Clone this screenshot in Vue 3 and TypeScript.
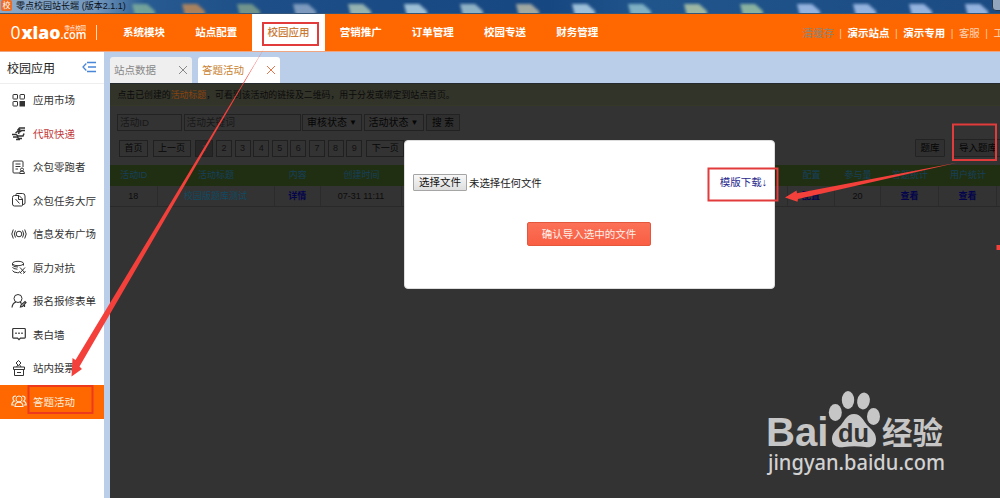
<script setup lang="ts">
interface MenuItem { label: string; icon: string; tone?: string }
interface Column { title: string; width: number; value: string; kind?: string }

const nav: string[] = ['系统模块', '站点配置', '校园应用', '营销推广', '订单管理', '校园专送', '财务管理']

const menu: MenuItem[] = [
  { label: '应用市场', icon: 'grid' },
  { label: '代取快递', icon: 'express', tone: 'red' },
  { label: '众包零跑者', icon: 'runner' },
  { label: '众包任务大厅', icon: 'tasks' },
  { label: '信息发布广场', icon: 'radio' },
  { label: '原力对抗', icon: 'force' },
  { label: '报名报修表单', icon: 'person' },
  { label: '表白墙', icon: 'chat' },
  { label: '站内投票', icon: 'vote' },
  { label: '答题活动', icon: 'group', tone: 'active' },
]

const pages: number[] = [2, 3, 4, 5, 6, 7, 8, 9]

const columns: Column[] = [
  { title: '活动ID', width: 47.5, value: '18' },
  { title: '活动标题', width: 117, value: '校园版题库测试', kind: 'title' },
  { title: '内容', width: 46.5, value: '详情', kind: 'link' },
  { title: '创建时间', width: 81, value: '07-31 11:11' },
  { title: '', width: 386, value: '' },
  { title: '配置', width: 47, value: '配置', kind: 'link' },
  { title: '参与量', width: 46, value: '20' },
  { title: '答题统计', width: 58, value: '查看', kind: 'link' },
  { title: '用户统计', width: 58, value: '查看', kind: 'link' },
  { title: '', width: 4, value: '' },
]
const gridColumns = columns.map((c) => c.width + 'px').join(' ')

const glints = [
  { x: 132, c: '#7fae9c' }, { x: 182, c: '#c08a58' }, { x: 237, c: '#7fa08c' }, { x: 293, c: '#8fa8c8' },
  { x: 348, c: '#a9c4b8' }, { x: 404, c: '#b4d4e4' }, { x: 460, c: '#a4c4d0' }, { x: 516, c: '#b9b9a8' },
  { x: 572, c: '#b4d4e8' }, { x: 628, c: '#8fc0cc' }, { x: 684, c: '#b3c9a8' }, { x: 740, c: '#9cc2a4' },
  { x: 797, c: '#a9c4ee' }, { x: 853, c: '#a9c4ee' }, { x: 909, c: '#a9c4ee' }, { x: 965, c: '#a9c4ee' },
]
</script>

<template>
  <div class="window">
    <div class="titlebar">
      <svg class="glints" width="1000" height="14">
        <defs><filter id="soft"><feGaussianBlur stdDeviation="1.5" /></filter></defs>
        <g filter="url(#soft)">
          <path v-for="g in glints" :key="g.x" :fill="g.c" :d="`M${g.x} 4h15l8 7v5h-20z`" />
        </g>
      </svg>
      <span class="app-icon">校</span>
      <span class="app-title">零点校园站长端 (版本2.1.1)</span>
      <span class="win-btn"></span>
    </div>

    <header class="header">
      <svg class="logo" width="108" height="37" viewBox="0 0 108 37">
        <g fill="#fff">
          <text x="10.5" y="24.5" font-family="Open Sans, sans-serif" font-size="18.5" textLength="10" lengthAdjust="spacingAndGlyphs">0</text>
          <text x="21.5" y="24.5" font-family="Open Sans, sans-serif" font-size="18" font-weight="800" textLength="39" lengthAdjust="spacingAndGlyphs">xiao</text>
          <text x="60.5" y="24.5" font-family="Open Sans, sans-serif" font-size="12" font-weight="600" textLength="26" lengthAdjust="spacingAndGlyphs">.com</text>
          <text x="64.5" y="15.500" font-family="Noto Sans CJK SC, sans-serif" font-size="5.4" textLength="21.5">零点校园</text>
          <rect x="96" y="11" width="1" height="15" opacity=".75" />
        </g>
      </svg>
      <nav class="nav">
        <a v-for="(n, i) in nav" :key="n" :class="{ active: i === 2 }">{{ n }}</a>
      </nav>
      <div class="tools">
        <span class="cache">清缓存</span><i>|</i><b>演示站点</b><i>|</i><b>演示专用</b><i>|</i><span>客服</span><i>|</i><span>工具</span>
      </div>
    </header>

    <div class="body">
      <aside class="sidebar">
        <div class="side-head">
          <span>校园应用</span>
          <svg width="15" height="12" viewBox="0 0 15 12" fill="none" stroke="#4a86d8" stroke-width="1.3">
            <path d="M5 1.5h9M6 6h8M5 10.5h9M4.3 2.5L1 6l3.300 3.500" />
          </svg>
        </div>
        <div v-for="m in menu" :key="m.label" class="side-item" :class="m.tone">
          <svg width="16" height="16" viewBox="0 0 16 16" fill="none" stroke="currentColor" stroke-width="1">
            <template v-if="m.icon === 'grid'">
              <rect x="2" y="2.500" width="4.500" height="4.500" rx=".5" /><rect x="9" y="2.500" width="4.500" height="4.500" rx=".5" />
              <rect x="2" y="9.500" width="4.500" height="4.500" rx=".5" /><rect x="9" y="9.500" width="4.500" height="4.500" fill="currentColor" />
            </template>
            <template v-else-if="m.icon === 'express'">
              <path d="M6.500 5.500l2-2.500h5.500M4.500 8l2-1.500h3l1-1h3.500M1 9.500h4l2 1.500h5l1-2.500M2 12h4.500l1 1.500h3.500M5 14.500h4M9 4l-1.500 5" stroke-width="1.500" />
            </template>
            <template v-else-if="m.icon === 'runner'">
              <path d="M8 14H3q-1 0-1-1V3q0-1 1-1h8q1 0 1 1v5M4.500 5h5M4.500 7.500h5M4.500 10H7" />
              <circle cx="11" cy="10.500" r="1.500" /><path d="M8.500 14.500q0-2.500 2.500-2.500t2.500 2.500z" />
            </template>
            <template v-else-if="m.icon === 'tasks'">
              <path d="M5 3V2.500q0-1 1-1h5.500q2.500 0 2.500 2.500v7q0 1.500-2 1.500" />
              <path d="M3.500 3.500h4.500L11.500 7V13q0 1-1 1H3.500q-2 0-2-2V5.500q0-2 2-2zM7.500 3.500v4h4M4.500 7l4 4.500" />
            </template>
            <template v-else-if="m.icon === 'radio'">
              <circle cx="8" cy="8" r="2.800" />
              <path d="M4.500 4.500q-2.500 3.500 0 7M2.300 3.500q-3 4.500 0 9M11.500 4.500q2.500 3.500 0 7M13.700 3.500q3 4.500 0 9" />
            </template>
            <template v-else-if="m.icon === 'force'">
              <ellipse cx="7" cy="4.500" rx="5.500" ry="2.200" />
              <path d="M1.500 4.500v1.500q0 2 5.500 2M1.500 8q0 2 5 2.200M1.500 11.500q.5 2 5 2.200H8M12.500 4.500v2M9 8.500l5 5.500M14 8.500L9 14M8 12.500l2.500 2M12 14.500l2.500-2" />
            </template>
            <template v-else-if="m.icon === 'person'">
              <circle cx="7" cy="5.500" r="4" /><path d="M1 14.500q.5-4.500 4-5.500M9 9l1.500 1.500M9.500 14l.5-2 4-3.500 1 1-3.500 4zM13.500 12v2" stroke-width="1.200" />
            </template>
            <template v-else-if="m.icon === 'chat'">
              <path d="M2.500 2.500h11q.8 0 .8.8v8q0 .8-.8.8H9.500L8 13.700 6.500 12.100h-4q-.8 0-.8-.8v-8q0-.8.800-.8z" stroke-width="1.200" />
              <path d="M4.300 7.300h1.400M7.300 7.300h1.400M10.300 7.300h1.400" stroke-width="1.500" />
            </template>
            <template v-else-if="m.icon === 'vote'">
              <path d="M2.500 7h11v2.500h-11zM3.500 9.500h9V15.500h-9zM6 12.500h4M5.500 7L7 5M5 3l2.500-2.500L10 3 7.500 5.500zM8.500 4.500L10 7" />
            </template>
            <template v-else>
              <circle cx="8" cy="6" r="3" /><path d="M4 13.500q0-4 4-4.500 4 .5 4 4.500zM5 3Q1.500 3 2 6q.3 1.500 1.500 2Q.8 9 .8 12H3M11 3q3.500 0 3 3-.3 1.500-1.500 2 2.700 1 2.700 4H13" stroke-width="1.200" />
            </template>
          </svg>
          <span>{{ m.label }}</span>
        </div>
      </aside>

      <main class="content">
        <div class="tabs">
          <div v-for="(t, i) in ['站点数据', '答题活动']" :key="t" class="tab" :class="{ on: i === 1 }">
            <span>{{ t }}</span>
            <svg width="10" height="10" viewBox="0 0 10 10" fill="none" stroke="currentColor"><path d="M1 1l8 8M9 1l-8 8" /></svg>
          </div>
        </div>

        <section class="panel">
          <p class="notice">点击已创建的<em>活动标题</em>，可看到该活动的链接及二维码，用于分发或绑定到站点首页。</p>
          <div class="filters">
            <span class="field id">活动ID</span>
            <span class="field key">活动关键词</span>
            <span class="field sel">审核状态<u>▼</u></span>
            <span class="field sel two">活动状态<u>▼</u></span>
            <span class="field search">搜 索</span>
          </div>
          <div class="pager">
            <span class="pg first">首页</span>
            <span class="pg prev">上一页</span>
            <span class="pg cur">1</span>
            <span class="nums"><span v-for="p in pages" :key="p" class="pg num">{{ p }}</span></span>
            <span class="pg next">下一页</span>
            <span class="spacer"></span>
            <span class="act bank">题库</span>
            <span class="act import">导入题库</span>
          </div>
          <div class="row head" :style="{ gridTemplateColumns: gridColumns }">
            <span v-for="(c, i) in columns" :key="i">{{ c.title }}</span>
          </div>
          <div class="row data" :style="{ gridTemplateColumns: gridColumns }">
            <span v-for="(c, i) in columns" :key="i" :class="c.kind">{{ c.value }}</span>
          </div>
        </section>
      </main>
    </div>

    <div class="modal">
      <div class="file-row">
        <span class="choose">选择文件</span>
        <span class="none">未选择任何文件</span>
        <a class="tpl">模版下载↓</a>
      </div>
      <span class="confirm">确认导入选中的文件</span>
    </div>

    <svg class="overlay" width="1000" height="498" viewBox="0 0 1000 498">
      <g class="brand" fill="#c6c6c6">
        <text x="766" y="446" font-family="Liberation Sans, Arial, sans-serif" font-weight="700" font-size="40" textLength="62.500" lengthAdjust="spacingAndGlyphs">Bai</text>
        <ellipse cx="835.300" cy="412.500" rx="6.500" ry="8.500" />
        <ellipse cx="848" cy="400" rx="6.200" ry="9" />
        <ellipse cx="863.500" cy="401" rx="6.300" ry="8.500" transform="rotate(10 863.500 401)" />
        <ellipse cx="873.500" cy="416.500" rx="6.500" ry="8.500" />
        <path d="M854 414c7 0 9 6 13 11 5 5 9 8 9 14 0 7-5 9-11 8-7-1-14-1-21 0-6 1-12-1-12-8 0-6 4-9 9-14 4-5 6-11 13-11z" />
        <text x="838" y="442" fill="#333" font-family="Liberation Sans, Arial, sans-serif" font-weight="700" font-size="25" textLength="31" lengthAdjust="spacingAndGlyphs">du</text>
        <text x="882" y="443.500" font-family="Noto Sans CJK SC, sans-serif" font-weight="700" font-size="31" textLength="61" lengthAdjust="spacingAndGlyphs">经验</text>
        <text x="768" y="470" fill="#d2d2d2" font-family="Noto Sans, Open Sans, sans-serif" font-size="21.500" font-weight="500" textLength="177" lengthAdjust="spacingAndGlyphs">jingyan.baidu.com</text>
      </g>
      <g fill="none" stroke="#e23b3b" stroke-width="2">
        <rect x="263" y="23" width="55" height="22" />
        <rect x="28.500" y="386" width="64" height="27" stroke="#ee3a1c" />
        <rect x="708.500" y="168.500" width="69" height="32" />
        <rect x="953" y="124.500" width="43" height="35.500" />
      </g>
      <g fill="#f4403b">
        <path d="M265.500 46L79.500 366.500l2.500 2.500-10.500 7.500 1-18.500 3 2z" />
        <path d="M958 162.500L798 199l-.5 2.800L785 197.500l11.500-7 .5 2.800z" />
        <rect x="996.500" y="245" width="4" height="5" />
      </g>
    </svg>
  </div>
</template>

<style>
html, body { margin: 0; overflow: hidden; }
</style>

<style scoped>
.window { position: relative; width: 1000px; height: 498px; overflow: hidden; display: flex; flex-direction: column; background: #bbcee9; font-family: "Liberation Sans", "Noto Sans CJK SC", sans-serif; font-size: 10.5px; color: #333; }
.window * { box-sizing: border-box; }
.window span, .window a, .window b { white-space: nowrap; }
.titlebar { position: relative; flex: 0 0 14px; display: flex; align-items: center; background: linear-gradient(90deg, #8ca9c7 0, #7398bd 95px, #285b91 145px, #1d4e87 260px, #174780 550px, #20558c 650px, #1b4b82); border-bottom: 1px solid #345779; overflow: hidden; }
.glints { position: absolute; left: 0; top: 0; opacity: .85; }
.app-icon { position: relative; width: 11px; height: 11px; margin: -2px 4px 0 1px; border-radius: 2px; background: #f26a1f; color: #fff; font-size: 8px; line-height: 11px; text-align: center; }
.app-title { position: relative; color: #0b1119; font-size: 9px; line-height: 13px; margin-top: -1px; letter-spacing: .02px; }
.win-btn { position: absolute; right: -14px; top: -4px; width: 22px; height: 15px; border: 1px solid #26384d; border-radius: 4px; background: #91a6bd; }
.header { flex: 0 0 38px; height: 38px; display: flex; background: #ff6700; border-bottom: 1px solid #efa582; }
.logo { flex: none; }
.nav { display: flex; }
.nav a { width: 72.200px; line-height: 37.500px; text-align: center; color: #fff; font-weight: 700; }
.nav a.active { background: #fff; color: #c97a35; font-weight: 500; }
.tools { margin-left: 189px; flex: none; display: flex; line-height: 38px; color: #ffd5b8; white-space: nowrap; }
.tools i { width: 13.700px; text-align: center; font-style: normal; color: #ffc59e; }
.tools b { color: #fff; }
.tools .cache { color: #98826c; font-weight: 500; }
.body { flex: 1; display: flex; min-height: 0; }
.sidebar { flex: 0 0 104px; background: #fff; }
.side-head { height: 31.500px; display: flex; align-items: center; justify-content: space-between; padding: 0 7px 0; border-bottom: 1px solid #eee; font-size: 12px; color: #222; }
.side-item { height: 33.500px; display: flex; align-items: center; padding: 0 0 1.500px 11px; gap: 6px; color: #333; }
.side-item.red span { color: #c23b3b; }
.side-item.active { background: #ff6700; color: #ffeedd; }
.content { flex: 1; min-width: 0; padding: 5px 0 0 6px; display: flex; flex-direction: column; }
.tabs { display: flex; gap: 6px; height: 26px; flex: none; }
.tab { width: 82px; display: flex; align-items: center; justify-content: space-between; padding: 0 4px 1px; border-radius: 3px 3px 0 0; background: #efefef; color: #888; }
.tab.on { background: #fff; color: #c98231; }
.tab.on svg { color: #e2764c; }
.panel { flex: 1; background: #333; border-top: 1px solid #252a2e; overflow: hidden; font-size: 9px; color: #0b0b0b; }
.notice { margin: 0; height: 22px; line-height: 22px; padding-left: 7.500px; background: #323329; border-bottom: 1px solid #373728; font-size: 8.900px; white-space: nowrap; }
.notice em { font-style: normal; color: #8a430f; }
.filters { display: flex; margin: 8px 0 0 7px; height: 17px; }
.field { border: 1px solid #222; height: 17px; line-height: 15px; padding-left: 2px; margin-right: 1.500px; color: #181818; font-size: 9.700px; }
.field.id { width: 65px; }
.field.key { width: 117px; }
.field.sel { width: 60px; display: flex; justify-content: space-between; padding: 0 4px; color: #050505; font-size: 10px; }
.field.sel u { text-decoration: none; font-size: 8px; }
.field.two { margin-right: 2.500px; }
.field.search { width: 34px; padding: 0; text-align: center; color: #050505; background: #2f2f2f; }
.pager { display: flex; align-items: flex-start; margin-top: 9px; padding-left: 9px; height: 25px; }
.pg { display: block; height: 17px; border: 1px solid #202020; line-height: 15px; text-align: center; color: #070707; }
.first { width: 29px; margin-right: 4.500px; }
.prev { width: 38px; margin-right: 4.500px; }
.cur { width: 18px; background: #272727; color: #393939; margin-right: 3px; }
.nums { display: flex; gap: 2.600px; margin-right: 4px; }
.num { width: 16px; color: #111; }
.next { width: 38px; }
.spacer { flex: 1; }
.act { flex: none; height: 18px; margin-top: -1px; line-height: 16px; text-align: center; border: 1px solid #232323; border-radius: 1px; background: #303030; font-size: 9.500px; color: #050505; }
.bank { width: 30px; margin-right: 8px; }
.import { width: 50px; margin-right: -3px; }
.row { display: grid; height: 20.500px; text-align: center; line-height: 20px; }
.row.head { background: #202f12; color: #16405c; }
.row.data { color: #0c0c0c; border-bottom: 1px solid #292929; height: 21.500px; }
.row.data span { border-right: 1px solid #2b2b2b; }
.data .title { color: #104a62; }
.data .link { color: #04044c; font-weight: 700; }
.modal { position: absolute; left: 404px; top: 140px; width: 371px; height: 149px; border-radius: 4px; background: #fff; border: 1px solid #ddd; display: flex; flex-direction: column; align-items: center; color: #222; }
.file-row { align-self: stretch; display: flex; align-items: center; margin: 32px 7px 0 8px; height: 18px; }
.choose { width: 54px; height: 17px; line-height: 15px; text-align: center; border: 1px solid #a5a5a5; border-radius: 1px; background: linear-gradient(#f7f7f7, #dedede); color: #111; margin-right: 2px; }
.none { font-size: 10.400px; }
.tpl { margin-left: auto; margin-top: -2px; color: #2a2a8c; }
.confirm { width: 124px; height: 24px; margin: 31px 1px 0 0; line-height: 22px; text-align: center; border: 1px solid #e4573c; border-radius: 2px; background: linear-gradient(#fb7157, #f95e43); color: #fff0ea; }
.overlay { position: absolute; left: 0; top: 0; pointer-events: none; }
</style>
